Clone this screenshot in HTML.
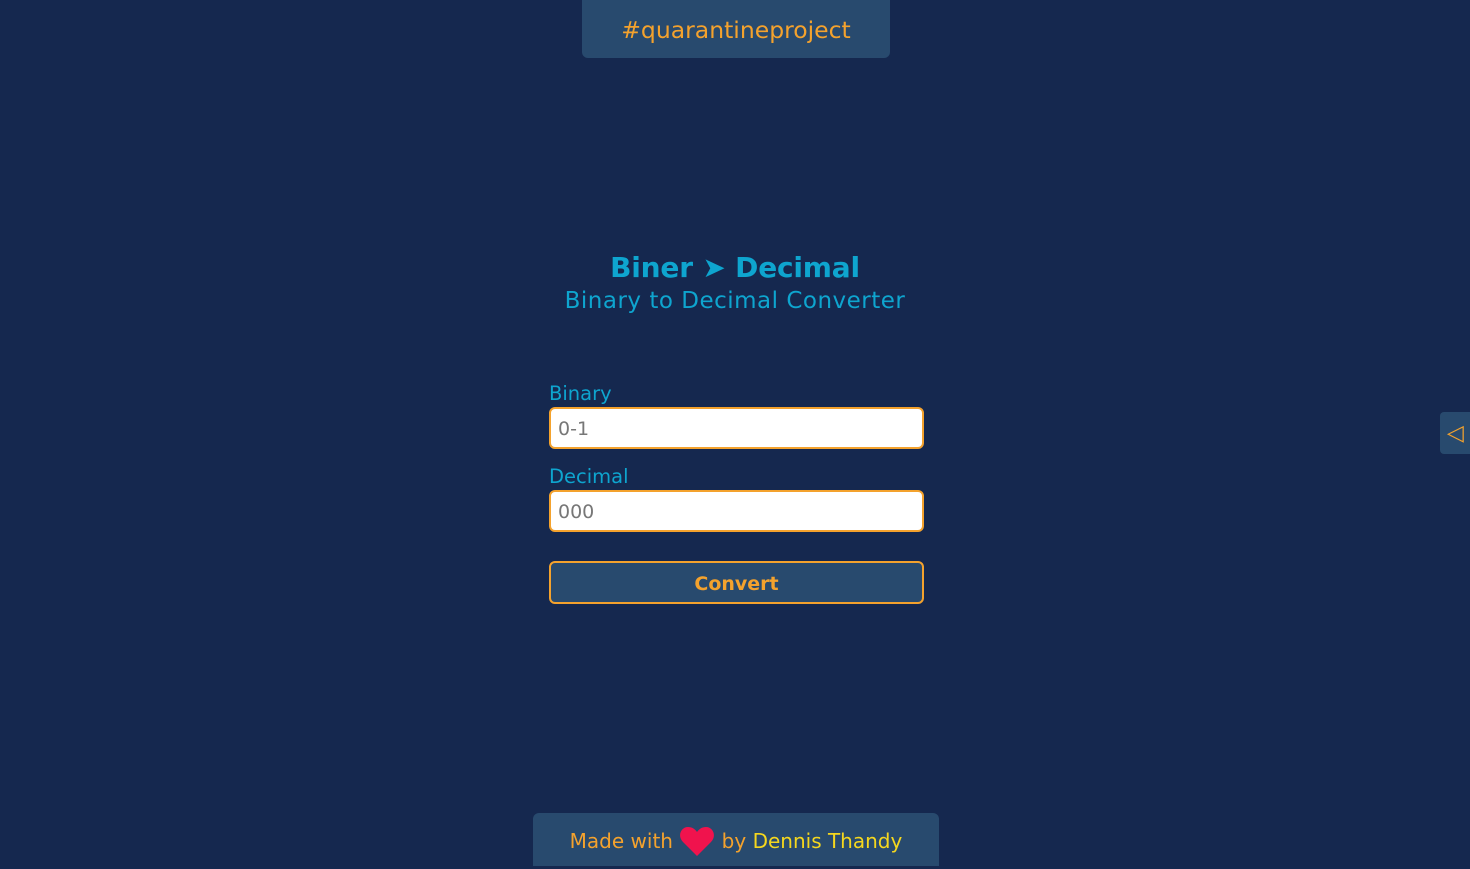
<!DOCTYPE html>
<html><head><meta charset="utf-8"><style>
html,body{margin:0;padding:0;}
body{width:1470px;height:866px;background:#15284f;font-family:"DejaVu Sans",Verdana,sans-serif;position:relative;overflow:hidden;}
.top{position:absolute;left:582px;top:0;width:308px;height:58px;background:#284a6e;border-radius:0 0 6px 6px;color:#f4a22d;font-size:23.5px;text-align:center;line-height:60px;}
h1{position:absolute;left:0;width:1470px;top:250px;margin:0;text-align:center;color:#0ea5cf;font-size:28px;font-weight:bold;line-height:36px;letter-spacing:-0.2px;}
.sub{position:absolute;left:0;width:1470px;top:286px;text-align:center;color:#0ea5cf;font-size:23px;line-height:30px;letter-spacing:0.5px;}
.lbl{position:absolute;left:549px;color:#0ea5cf;font-size:19.5px;}
.inp{position:absolute;left:549px;height:38px;background:#fff;border:2px solid #f4a22d;border-radius:6px;font-size:19px;color:#777;line-height:40px;padding-left:7px;box-sizing:content-box;width:364px;}
.btn{position:absolute;left:549px;top:561px;width:371px;height:39px;background:#284a6e;border:2px solid #f4a22d;border-radius:6px;color:#f4a22d;font-weight:bold;font-size:19px;text-align:center;line-height:42px;}
.side{position:absolute;left:1440px;top:412px;width:40px;height:42px;background:#284a6e;border-radius:4px;color:#f4a22d;font-size:22px;line-height:44px;padding-left:7px;box-sizing:border-box;}
.foot{position:absolute;left:533px;top:813px;width:406px;height:53px;background:#284a6e;border-radius:6px 6px 0 0;text-align:center;font-size:20px;line-height:56px;color:#f4a22d;}
.foot .y{color:#f5d71e;}
</style></head><body>
<div class="top">#quarantineproject</div>
<h1>Biner ➤ Decimal</h1>
<div class="sub">Binary to Decimal Converter</div>
<div class="lbl" style="top:382px">Binary</div>
<div class="inp" style="top:407px">0-1</div>
<div class="lbl" style="top:465px">Decimal</div>
<div class="inp" style="top:490px">000</div>
<div class="btn">Convert</div>
<div class="side">◁</div>
<div class="foot">Made with <svg width="36" height="32" viewBox="0 0 36 32" style="vertical-align:-9px"><path d="M18 31 L4 17 C-2 11 2 2 9 2 C13 2 16 4 18 7 C20 4 23 2 27 2 C34 2 38 11 32 17 Z" fill="#f0134d"/></svg> by <span class="y">Dennis Thandy</span></div>
</body></html>
